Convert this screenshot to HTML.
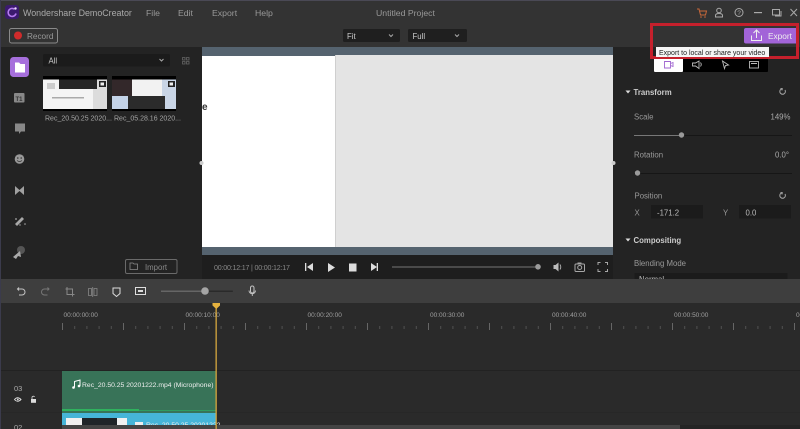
<!DOCTYPE html>
<html><head><meta charset="utf-8"><style>
html,body{margin:0;padding:0;background:#2a2a2a;width:800px;height:429px;overflow:hidden}
svg{display:block;font-family:"Liberation Sans",sans-serif;fill:#b0b0b0}
#root{filter:blur(.3px)}
text{font-size:8.5px}
.ic{fill:none;stroke:#a8a8a8;stroke-width:1}
.ts{font-size:6.5px;fill:#a0a0a0}
</style></head><body>
<svg id="root" width="800" height="429" viewBox="0 0 800 429" xmlns="http://www.w3.org/2000/svg">
<defs>
<pattern id="ticks" x="62" y="322" width="61" height="8" patternUnits="userSpaceOnUse">
<rect x="0" y="1" width="1" height="7" fill="#666"/>
<rect x="12.2" y="4" width="1" height="3" fill="#505050"/><rect x="24.4" y="4" width="1" height="3" fill="#505050"/><rect x="36.6" y="4" width="1" height="3" fill="#505050"/><rect x="48.8" y="4" width="1" height="3" fill="#505050"/>
</pattern>
</defs>
<!-- backgrounds -->
<rect width="800" height="429" fill="#2a2a2a"/>
<rect width="800" height="47" fill="#333333"/>
<rect width="800" height="1" fill="#4a4955"/>
<rect y="47" width="800" height="232" fill="#232323"/>
<rect x="202" y="47" width="411" height="208" fill="#55636f"/>
<rect x="202" y="56" width="134" height="191" fill="#ffffff"/>
<rect x="335" y="55" width="1" height="192" fill="#cfcfcf"/>
<rect x="336" y="55" width="277" height="192" fill="#e4e4e4"/>
<rect x="202" y="255" width="411" height="24" fill="#1e1e1e"/>
<rect y="279" width="800" height="24" fill="#3e3e3e"/>
<rect y="303" width="800" height="126" fill="#2a2a2a"/>
<rect y="370" width="800" height="1" fill="#222"/>
<rect y="412" width="800" height="1" fill="#272727"/>
<rect x="0" width="1" height="429" fill="#3b3b4c"/>

<!-- title bar -->
<rect x="5" y="5" width="14" height="14" rx="3" fill="#3b1a6e"/>
<path d="M14.500 9.200A4 4 0 1 0 16 13.500" fill="none" stroke="#b57bee" stroke-width="1.600"/>
<circle cx="15.500" cy="8.500" r="1.200" fill="#e8d8f8"/>
<text x="23" y="16" style="font-size:8.900px" fill="#aaa">Wondershare DemoCreator</text>
<text x="146" y="16" style="font-size:8.700px" fill="#999">File</text>
<text x="178" y="16" style="font-size:8.700px" fill="#999">Edit</text>
<text x="212" y="16" style="font-size:8.700px" fill="#999">Export</text>
<text x="255" y="16" style="font-size:8.700px" fill="#999">Help</text>
<text x="376" y="16" style="font-size:8.700px" fill="#999">Untitled Project</text>
<!-- window icons -->
<path d="M697 9h2l1.500 6h5l1-4h-6.500" fill="none" stroke="#c9683a" stroke-width="1"/>
<circle cx="701" cy="17" r=".8" fill="#c9683a"/><circle cx="705" cy="17" r=".8" fill="#c9683a"/>
<circle cx="719" cy="10.500" r="2.300" class="ic"/><path d="M715.500 17v-1.500q0-2 3.500-2t3.500 2V17z" class="ic"/>
<circle cx="739" cy="12.500" r="4" class="ic"/><text x="737.300" y="15" style="font-size:6.500px" fill="#aaa">?</text>
<rect x="754" y="12" width="8" height="1.200" fill="#aaa"/>
<rect x="772.500" y="9.500" width="7" height="5.500" class="ic"/><path d="M781 11v5h-6" class="ic"/>
<path d="M790.500 9l6.500 7M797 9l-6.500 7" class="ic"/>

<!-- toolbar -->
<rect x="9.500" y="28.500" width="48" height="14.500" rx="2" fill="none" stroke="#8a8a8a"/>
<circle cx="18" cy="35.500" r="4" fill="#d02b2b"/>
<text x="27" y="39" style="font-size:8.200px" fill="#999">Record</text>
<rect x="343" y="29" width="57" height="13" rx="1.500" fill="#1f1f1f"/>
<text x="347" y="39" style="font-size:7.800px" fill="#ccc">Fit</text>
<path d="M389 34.500l2 2 2-2" class="ic"/>
<rect x="408" y="29" width="59" height="13" rx="1.500" fill="#1f1f1f"/>
<text x="412.500" y="39" style="font-size:7.800px" fill="#ccc">Full</text>
<path d="M455 34.500l2 2 2-2" class="ic"/>

<!-- export -->
<rect x="744" y="28" width="54" height="15.500" rx="2" fill="#a264d8"/>
<path d="M751.500 35.500v5h10v-5M756.500 38v-7.500M753.500 33l3-3 3 3" fill="none" stroke="#eee" stroke-width="1"/>
<text x="768" y="39" style="font-size:8.300px" fill="#eee">Export</text>
<!-- left panel -->
<rect x="10" y="57" width="19" height="20" rx="3.500" fill="#a66fdc"/>
<path d="M15 62.500h4l1.500 1.500H25v8.500H15z" fill="#fff"/>
<rect x="43" y="54" width="127" height="12.500" rx="1.500" fill="#1b1b1b"/>
<text x="48.500" y="63.500" style="font-size:7.800px" fill="#ccc">All</text>
<path d="M159.500 59l2 2 2-2" class="ic"/>
<path d="M182.500 57.500h2.500v2.500h-2.500zM186.500 57.500h2.500v2.500h-2.500zM182.500 61.500h2.500v2.500h-2.500zM186.500 61.500h2.500v2.500h-2.500z" fill="none" stroke="#666" stroke-width=".8"/>
<!-- thumb 1 -->
<rect x="43" y="76" width="64" height="35" fill="#000"/>
<rect x="43" y="79.500" width="64" height="29.500" fill="#f4f4f4"/>
<rect x="93" y="79.500" width="14" height="29.500" fill="#dcdcdc"/>
<rect x="59" y="79.500" width="38" height="9.500" fill="#262626"/>
<rect x="99" y="81" width="7" height="6" fill="#222"/><rect x="100.500" y="82.500" width="3.500" height="3" fill="#eee"/>
<rect x="52" y="97" width="32" height="1.500" fill="#aaa"/>
<rect x="47" y="83" width="8" height="6" fill="#ccc"/>
<!-- thumb 2 -->
<rect x="112" y="76" width="64" height="35" fill="#000"/>
<rect x="112" y="79.500" width="64" height="29.500" fill="#c9d5e6"/>
<rect x="112" y="79.500" width="22" height="16.500" fill="#33282a"/>
<rect x="132" y="79.500" width="30" height="17" fill="#f2f2f2"/>
<rect x="112" y="96" width="16" height="13" fill="#c4d3e8"/>
<rect x="128" y="96" width="37" height="13" fill="#2b2b2b"/>
<rect x="168" y="81" width="7" height="6" fill="#222"/><rect x="169.500" y="82.500" width="3.500" height="3" fill="#eee"/>
<text x="45" y="120.500" style="font-size:7px" fill="#a5a5a5">Rec_20.50.25 2020...</text>
<text x="114" y="120.500" style="font-size:7px" fill="#a5a5a5">Rec_05.28.16 2020...</text>
<text x="202" y="110" style="font-size:10px;font-weight:bold" fill="#333">e</text>
<!-- sidebar icons -->
<rect x="14" y="93" width="10.500" height="9.500" rx="1" fill="#888"/>
<text x="15.500" y="101" style="font-size:6px;font-weight:bold" fill="#333">T1</text>
<path d="M15 123.500h10v8h-4l-2 2.500v-2.500h-4z" fill="#888"/>
<circle cx="19.500" cy="159" r="4.800" fill="#999"/>
<circle cx="17.800" cy="158" r=".8" fill="#333"/><circle cx="21.200" cy="158" r=".8" fill="#333"/><path d="M17 160.500q2.500 2 5 0" fill="none" stroke="#333" stroke-width=".7"/>
<path d="M15 186l4.500 4 4.500-4v9l-4.500-4-4.500 4z" fill="#a0a0a0"/>
<path d="M15 224l7-7 2 2-7 7z" fill="#a8a8a8"/>
<circle cx="16" cy="219" r=".9" fill="#aaa"/><circle cx="25" cy="224" r=".8" fill="#aaa"/><circle cx="20" cy="225" r=".7" fill="#aaa"/>
<circle cx="21" cy="250" r="4" fill="#555"/>
<path d="M13 257l7-6 1 6-3-1-2 3z" fill="#aaa"/>
<rect x="125.500" y="259.500" width="51.500" height="14" rx="1.500" fill="none" stroke="#6a6a6a"/>
<path d="M130 263h3l1 1h3.500v5.500H130z" fill="none" stroke="#8a8a8a" stroke-width=".8"/>
<text x="145" y="270" style="font-size:7.800px" fill="#888">Import</text>
<!-- preview handles -->
<circle cx="201.500" cy="163" r="2" fill="#ccc"/>
<circle cx="613.500" cy="163" r="2" fill="#ccc"/>

<!-- tooltip and tabs -->
<rect x="654" y="58" width="114" height="14" rx="1" fill="#000"/>
<rect x="654" y="58" width="29" height="14" rx="1" fill="#fff"/>
<path d="M664.500 61.500h6v6.500h-6zM670.500 63.500l2.500-1v4l-2.500-1" fill="none" stroke="#a066d0" stroke-width=".9"/>
<path d="M692.500 63h3l3.500-2v7.500L695.500 66h-3zM700.500 62.500q1.500 2 0 4" fill="none" stroke="#bbb" stroke-width=".9"/>
<path d="M722.500 61l6 4-3 .5-1 3z" fill="none" stroke="#bbb" stroke-width=".9"/>
<rect x="749.500" y="61.500" width="9" height="6.500" fill="none" stroke="#bbb" stroke-width=".9"/>
<rect x="751" y="63" width="6" height="1" fill="#bbb"/>
<rect x="651.500" y="24.500" width="146" height="33" fill="none" stroke="#c5202c" stroke-width="3"/>
<rect x="656" y="47" width="113" height="10" fill="#f5f5f5"/>
<text x="659" y="55" style="font-size:7px" fill="#222">Export to local or share your video</text>

<!-- right panel -->
<path d="M625.500 90.500h5l-2.500 3z" fill="#ddd"/>
<text x="633.500" y="95" style="font-size:7.800px;font-weight:bold" fill="#ccc">Transform</text>
<path d="M785 90a2.800 2.800 0 1 1-2.900-1.300M780.500 88.500l1.800.2-.4 1.700" class="ic"/>
<text x="634" y="119.500" style="font-size:7.800px" fill="#999">Scale</text>
<text x="770.500" y="119.500" style="font-size:7.800px" fill="#aaa">149%</text>
<rect x="634" y="135" width="158" height="1" fill="#161616"/><rect x="634" y="135" width="47" height="1" fill="#777"/>
<circle cx="681.500" cy="135" r="2.700" fill="#9a9a9a"/>
<text x="634" y="157.500" style="font-size:7.800px" fill="#999">Rotation</text>
<text x="775" y="157.500" style="font-size:7.800px" fill="#aaa">0.0°</text>
<rect x="634" y="173" width="158" height="1" fill="#161616"/>
<circle cx="637.500" cy="173" r="2.700" fill="#9a9a9a"/>
<text x="634.500" y="198.500" style="font-size:7.800px" fill="#999">Position</text>
<path d="M785 194a2.800 2.800 0 1 1-2.900-1.300M780.500 192.500l1.800.2-.4 1.700" class="ic"/>
<text x="634.500" y="215.500" style="font-size:7.800px" fill="#999">X</text>
<rect x="651" y="205" width="52" height="13.500" fill="#1b1b1b"/>
<text x="657" y="215.500" style="font-size:7.800px" fill="#bbb">-171.2</text>
<text x="723" y="215.500" style="font-size:7.800px" fill="#999">Y</text>
<rect x="739" y="205" width="52" height="13.500" fill="#1b1b1b"/>
<text x="745.500" y="215.500" style="font-size:7.800px" fill="#bbb">0.0</text>
<path d="M625.500 238.500h5l-2.500 3z" fill="#ddd"/>
<text x="633.500" y="243" style="font-size:7.800px;font-weight:bold" fill="#ccc">Compositing</text>
<text x="634" y="266" style="font-size:7.800px" fill="#999">Blending Mode</text>
<rect x="634.500" y="273" width="153" height="6" fill="#1b1b1b"/>
<svg x="634" y="273" width="60" height="6"><text x="5" y="9" style="font-size:7.800px" fill="#bbb">Normal</text></svg>

<!-- playback controls -->
<text x="214" y="270" style="font-size:7.100px;letter-spacing:-.2px" fill="#888">00:00:12:17 | 00:00:12:17</text>
<path d="M305 263v8h1.300v-8zM313 263v8l-6-4z" fill="#ddd"/>
<path d="M328 263v9l7-4.500z" fill="#ddd"/>
<rect x="349" y="263.500" width="7.500" height="8" fill="#ddd"/>
<path d="M378 263v8h-1.300v-8zM371 263v8l6-4z" fill="#ddd"/>
<rect x="392" y="266.500" width="146" height="1" fill="#777"/>
<circle cx="538" cy="266.800" r="2.800" fill="#9a9a9a"/>
<path d="M553.500 265h2l3-2.500v9l-3-2.500h-2z" fill="#bbb"/><path d="M560 264.500q1.500 2.500 0 5" class="ic"/>
<rect x="575" y="264" width="9.500" height="7.500" rx="1" class="ic"/><circle cx="579.700" cy="267.500" r="2" class="ic"/><rect x="577.500" y="262.500" width="4" height="1.500" fill="#a8a8a8"/>
<path d="M598 265v-2.500h2.500M605 262.500h2.500v2.500M607.500 269v2.500H605M600.500 271.500H598V269" class="ic"/>

<!-- timeline toolbar -->
<path d="M19 287.500l-1.500 1.500 1.500 1.500M17.500 289h4.500a2.800 2.800 0 0 1 0 6h-3" fill="none" stroke="#c4c4c4" stroke-width="1"/>
<path d="M47.500 287.500l1.500 1.500-1.500 1.500M49 289h-4.500a2.800 2.800 0 0 0 0 6h3" fill="none" stroke="#777" stroke-width="1"/>
<path d="M67 287v7.500h7.500M65.500 289h7v7.500" fill="none" stroke="#888" stroke-width="1"/>
<path d="M88.500 288.500h3v7h-3zM94 288.500h3v7h-3zM92.700 287v10" fill="none" stroke="#888" stroke-width=".8"/>
<path d="M113 288h7v5.500l-3.500 3-3.500-3z" fill="none" stroke="#ddd" stroke-width="1"/>
<rect x="135.500" y="287.500" width="10" height="7" fill="none" stroke="#ddd" stroke-width="1"/>
<path d="M138 291h5" stroke="#ddd" stroke-width="2"/>
<rect x="161" y="290.500" width="72" height="1.500" rx=".7" fill="#2a2a2a"/><rect x="161" y="290.500" width="44" height="1.500" fill="#666"/>
<circle cx="205" cy="291" r="3.800" fill="#a5a5a5"/>
<rect x="250.500" y="286" width="3.500" height="7" rx="1.700" fill="none" stroke="#c4c4c4"/>
<path d="M249 290.500a3.200 3.200 0 0 0 6.500 0M252.300 294v2" fill="none" stroke="#c4c4c4" stroke-width=".9"/>

<!-- ruler -->
<rect x="62" y="322" width="738" height="8" fill="url(#ticks)"/>
<text x="63.500" y="317" class="ts">00:00:00:00</text>
<text x="185.500" y="317" class="ts">00:00:10:00</text>
<text x="307.500" y="317" class="ts">00:00:20:00</text>
<text x="430" y="317" class="ts">00:00:30:00</text>
<text x="552" y="317" class="ts">00:00:40:00</text>
<text x="674" y="317" class="ts">00:00:50:00</text>
<text x="796" y="317" class="ts">00:01:00:00</text>

<!-- tracks -->
<rect x="62" y="371" width="154" height="42" fill="#387358"/>
<rect x="62" y="410" width="154" height="1" fill="#2f9c61"/>
<rect x="62" y="409" width="77" height="2" fill="#2fb25e"/>
<path d="M74.500 387.500v-6l5.500-1.500v6" fill="none" stroke="#fff" stroke-width="1"/>
<circle cx="73.500" cy="387.500" r="1.300" fill="#fff"/><circle cx="79" cy="386" r="1.300" fill="#fff"/>
<text x="82" y="387" style="font-size:6.800px" fill="#eee">Rec_20.50.25 20201222.mp4 (Microphone)</text>
<rect x="62" y="413" width="154" height="16" fill="#46b5d8"/>
<rect x="66" y="418" width="61" height="8" fill="#f0f0f0"/>
<rect x="82" y="418" width="35" height="8" fill="#1f2428"/>
<rect x="135" y="422" width="8" height="7" fill="#eee"/>
<text x="146" y="427" style="font-size:6.800px" fill="#eee">Rec_20.50.25 20201222</text>
<text x="14" y="391" style="font-size:7.500px" fill="#aaa">03</text>
<path d="M14.500 399.500q3-3.500 6.500 0-3.500 3.500-6.500 0z" fill="none" stroke="#ddd" stroke-width=".9"/><circle cx="17.800" cy="399.500" r=".9" fill="#ddd"/>
<rect x="31" y="399" width="5" height="3.800" fill="#ddd"/><path d="M32 399v-1.500a1.300 1.300 0 0 1 2.500-.5" fill="none" stroke="#ddd" stroke-width=".8"/>
<text x="14" y="430" style="font-size:7.500px" fill="#aaa">02</text>
<!-- scrollbar -->
<rect x="62" y="425" width="618" height="4" fill="#444"/>
<rect x="680" y="425" width="120" height="4" fill="#242424"/>
<!-- playhead -->
<rect x="215.500" y="306" width="1.300" height="123" fill="#d6a83e"/>
<path d="M212.500 303h7.500v2.500l-3.700 3.500-3.800-3.500z" fill="#e5b23f"/>
</svg>
</body></html>
